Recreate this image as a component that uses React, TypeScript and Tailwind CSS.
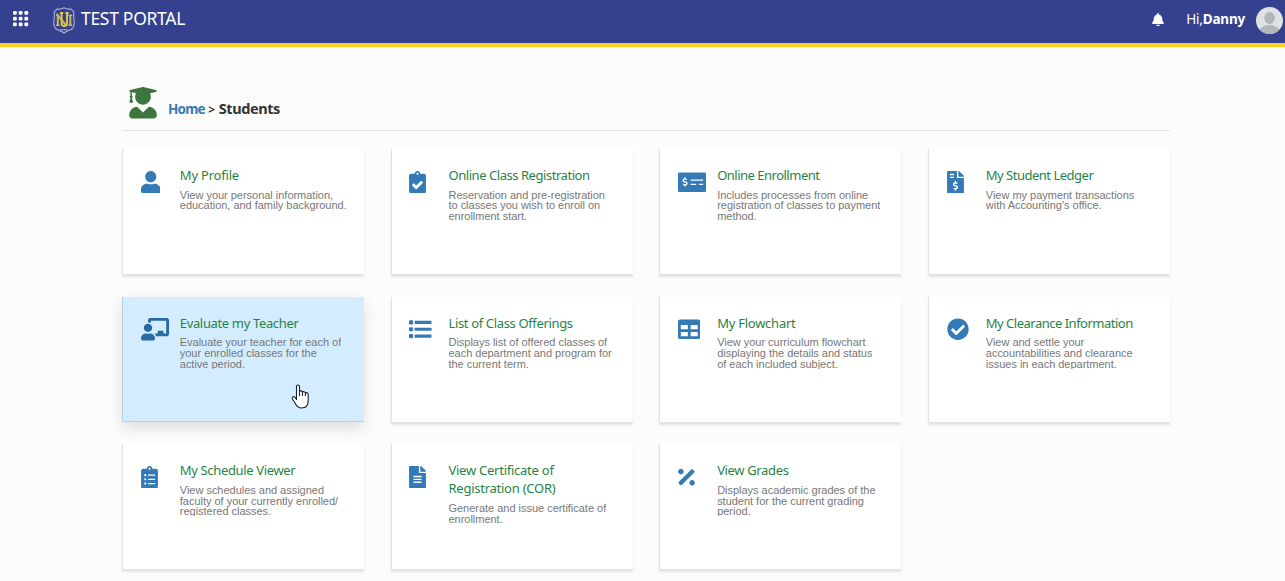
import type { ComponentType } from "react";
import {
  FaBell,
  FaChalkboardTeacher,
  FaCheckCircle,
  FaClipboardCheck,
  FaClipboardList,
  FaFileAlt,
  FaFileInvoiceDollar,
  FaMoneyCheckAlt,
  FaPercentage,
  FaTable,
  FaUser,
  FaUserGraduate,
} from "react-icons/fa";

interface Module {
  title: string[];
  lines: string[];
  icon: ComponentType<{ className?: string }>;
  iconWidth: string;
  tracking?: string;
  active?: boolean;
}

function ListIcon({ className }: { className?: string }) {
  return (
    <svg viewBox="0 0 22 22" fill="currentColor" className={className}>
      {[2.3, 9, 15.7].map((y) => (
        <g key={y}>
          <rect x="0" y={y} width="4" height="4" rx="0.8" />
          <rect x="5.5" y={y + 0.5} width="16.5" height="3" rx="0.6" />
        </g>
      ))}
    </svg>
  );
}

const modules: Module[] = [
  {
    title: ["My Profile"],
    lines: ["View your personal information,", "education, and family background."],
    icon: FaUser,
    iconWidth: "w-[19.5px]",
    tracking: "tracking-[-0.2px]",
  },
  {
    title: ["Online Class Registration"],
    lines: ["Reservation and pre-registration", "to classes you wish to enroll on", "enrollment start."],
    icon: FaClipboardCheck,
    iconWidth: "w-[17px]",
    tracking: "tracking-[-0.45px]",
  },
  {
    title: ["Online Enrollment"],
    lines: ["Includes processes from online", "registration of classes to payment", "method."],
    icon: FaMoneyCheckAlt,
    iconWidth: "w-[28px]",
    tracking: "tracking-[-0.5px]",
  },
  {
    title: ["My Student Ledger"],
    lines: ["View my payment transactions", "with Accounting's office."],
    icon: FaFileInvoiceDollar,
    iconWidth: "w-[17px]",
    tracking: "tracking-[-0.5px]",
  },
  {
    title: ["Evaluate my Teacher"],
    lines: ["Evaluate your teacher for each of", "your enrolled classes for the", "active period."],
    icon: FaChalkboardTeacher,
    iconWidth: "w-[28px]",
    tracking: "tracking-[-0.35px]",
    active: true,
  },
  {
    title: ["List of Class Offerings"],
    lines: ["Displays list of offered classes of", "each department and program for", "the current term."],
    icon: ListIcon,
    iconWidth: "w-[22.5px]",
    tracking: "tracking-[-0.35px]",
  },
  {
    title: ["My Flowchart"],
    lines: ["View your curriculum flowchart", "displaying the details and status", "of each included subject."],
    icon: FaTable,
    iconWidth: "w-[22.5px]",
    tracking: "tracking-[-0.25px]",
  },
  {
    title: ["My Clearance Information"],
    lines: ["View and settle your", "accountabilities and clearance", "issues in each department."],
    icon: FaCheckCircle,
    iconWidth: "w-[22px]",
    tracking: "tracking-[-0.5px]",
  },
  {
    title: ["My Schedule Viewer"],
    lines: ["View schedules and assigned", "faculty of your currently enrolled/", "registered classes."],
    icon: FaClipboardList,
    iconWidth: "w-[17px]",
    tracking: "tracking-[-0.35px]",
  },
  {
    title: ["View Certificate of", "Registration (COR)"],
    lines: ["Generate and issue certificate of", "enrollment."],
    icon: FaFileAlt,
    iconWidth: "w-[17px]",
    tracking: "tracking-[-0.25px]",
  },
  {
    title: ["View Grades"],
    lines: ["Displays academic grades of the", "student for the current grading", "period."],
    icon: FaPercentage,
    iconWidth: "w-[17px]",
    tracking: "tracking-[-0.35px]",
  },
];

function GridIcon() {
  return (
    <svg width="16" height="16" viewBox="0 0 16 16" fill="#fff">
      {[0, 5.7, 11.4].map((y) =>
        [0, 5.7, 11.4].map((x) => <rect key={`${x}-${y}`} x={x} y={y} width="3.8" height="3.8" rx="1.2" />)
      )}
    </svg>
  );
}

function Crest() {
  return (
    <svg width="22" height="27" viewBox="0 0 22 27" fill="none">
      <path
        d="M11 .8C9 2 6.500 2.400 4 2L1 5.200c.8 1.800.4 3.800.1 6C.6 15 .4 18.500 2 20.800c1.800 2.400 5.500 2.600 9 5.200 3.500-2.600 7.200-2.800 9-5.200 1.600-2.300 1.400-5.800.9-9.600-.3-2.200-.7-4.200.1-6L18 2C15.500 2.400 13 2 11 .8Z"
        stroke="#a9b1d8"
        strokeWidth="1.100"
      />
      <path d="M4.800 18.300V8.300l8 9.700M17.300 8.300v10" stroke="#cfb84f" strokeWidth="2" />
      <path d="M3 8.300h3M3 18.300h3.600M15.400 8.300h3.800M15.400 18.300h3.800" stroke="#cfb84f" strokeWidth="1.500" />
      <path d="M8.600 6v10c0 4.200 5.400 4.200 5.400 0V6M7 6h3.200M12.400 6h3.200" stroke="#e0cb4c" strokeWidth="1.900" />
      <path d="M7 22.700h8" stroke="#a9b1d8" strokeWidth="1.600" strokeDasharray="1.400 .6" />
    </svg>
  );
}

function Avatar() {
  return (
    <svg width="27" height="27" viewBox="0 0 27 27">
      <clipPath id="avatar">
        <circle cx="13.500" cy="13.500" r="13.500" />
      </clipPath>
      <g clipPath="url(#avatar)">
        <rect width="27" height="27" fill="#dfe1e2" />
        <ellipse cx="13.500" cy="11" rx="5.300" ry="6" fill="#b0b6b9" />
        <ellipse cx="13.500" cy="24" rx="10" ry="6" fill="#b0b6b9" />
      </g>
    </svg>
  );
}

function HandPointer() {
  return (
    <svg width="19" height="25" viewBox="0 0 19 25" className="absolute left-[168px] top-[87px]">
      <path
        d="M5.500 13.500V2.500c0-2 3-2 3 0v5c.4-1 2.800-.8 3 .7.500-.9 2.700-.6 2.900.8.800-.7 2.800-.3 2.800 1.500v6c0 4.500-2.200 7.500-6.700 7.500-3.500 0-5-2-6.500-5L1.300 14.700c-.6-1.800 1.200-2.600 2.400-1.500l1.800 2.300Z"
        fill="#fff"
        stroke="#1b1b2b"
        strokeWidth="1.100"
        strokeLinejoin="round"
      />
      <path d="M8.500 7.500v4.500M11.500 8.200V12M14.400 9V12" stroke="#1b1b2b" strokeWidth="1.100" />
    </svg>
  );
}

function ModuleCard({ title, lines, icon: Icon, iconWidth, tracking = "", active }: Module) {
  return (
    <div
      className={`relative flex h-[125px] border-l pl-[17.500px] pt-[17px] ${
        active
          ? "border-b border-[#b4d2e4] bg-[#d4ecff] shadow-[0_6px_14px_rgba(0,0,0,0.12)]"
          : "border-[#e1e1e1] bg-white shadow-[0_3px_2px_#e2e2e2]"
      }`}
    >
      <div className="w-[39.300px] shrink-0 pt-[4.500px]">
        <Icon className={`h-[22.500px] ${iconWidth} ${active ? "text-[#286aa3]" : "text-[#337ab7]"}`} />
      </div>
      <div className="whitespace-nowrap">
        <h4 className={`font-['Noto_Sans'] text-[13px] leading-[18px] text-[#1f8446] ${tracking}`}>
          {title.map((t) => (
            <span key={t} className="block">{t}</span>
          ))}
        </h4>
        <p className="mt-[5.700px] max-h-[31.500px] overflow-hidden font-['Liberation_Sans'] text-[11px] leading-[10.800px] tracking-[-0.020px] text-[#777]">
          {lines.map((l) => (
            <span key={l} className="block">{l}</span>
          ))}
        </p>
      </div>
      {active && <HandPointer />}
    </div>
  );
}

export default function App() {
  return (
    <div className="h-[581px] overflow-hidden bg-[#fcfcfc] font-['Noto_Sans',sans-serif]">
      <header className="flex h-[47px] items-start border-b-4 border-[#ffd21f] bg-[#35408f] pl-[13px] text-white">
        <div className="pt-[11px]">
          <GridIcon />
        </div>
        <div className="ml-6 pt-[7px]">
          <Crest />
        </div>
        <span className="ml-[6px] pt-[6px] text-[17.500px] leading-6 tracking-[-0.300px]">TEST PORTAL</span>
        <div className="ml-auto flex">
          <FaBell className="mt-[12.500px] h-[13.500px] w-[12px]" />
          <span className="ml-[22px] pt-[10px] text-[13.500px] leading-[18px] tracking-[-0.200px]">
            Hi,<b className="font-bold">Danny</b>
          </span>
          <div className="ml-[11px] mr-[2px] pt-[7px]">
            <Avatar />
          </div>
        </div>
      </header>

      <main className="ml-[122px] w-[1048px]">
        <div className="flex h-[84px] items-start border-b border-[#e3e3e3] pl-[7px] pt-[40px]">
          <FaUserGraduate className="h-[31.500px] w-[28px] text-[#3c763d]" />
          <div className="ml-[11px] mt-[11px] flex items-baseline gap-[3.500px] font-bold leading-5 text-[#333]">
            <a className="text-[13.500px] tracking-[-0.800px] text-[#337ab7]">Home</a>
            <span className="text-[12px]">&gt;</span>
            <span className="text-[14.500px] tracking-[-0.400px]">Students</span>
          </div>
        </div>
        <div className="mt-[18px] grid grid-cols-4 gap-x-[26.700px] gap-y-[22.600px]">
          {modules.map((m) => (
            <ModuleCard key={m.title[0]} {...m} />
          ))}
        </div>
      </main>
    </div>
  );
}
